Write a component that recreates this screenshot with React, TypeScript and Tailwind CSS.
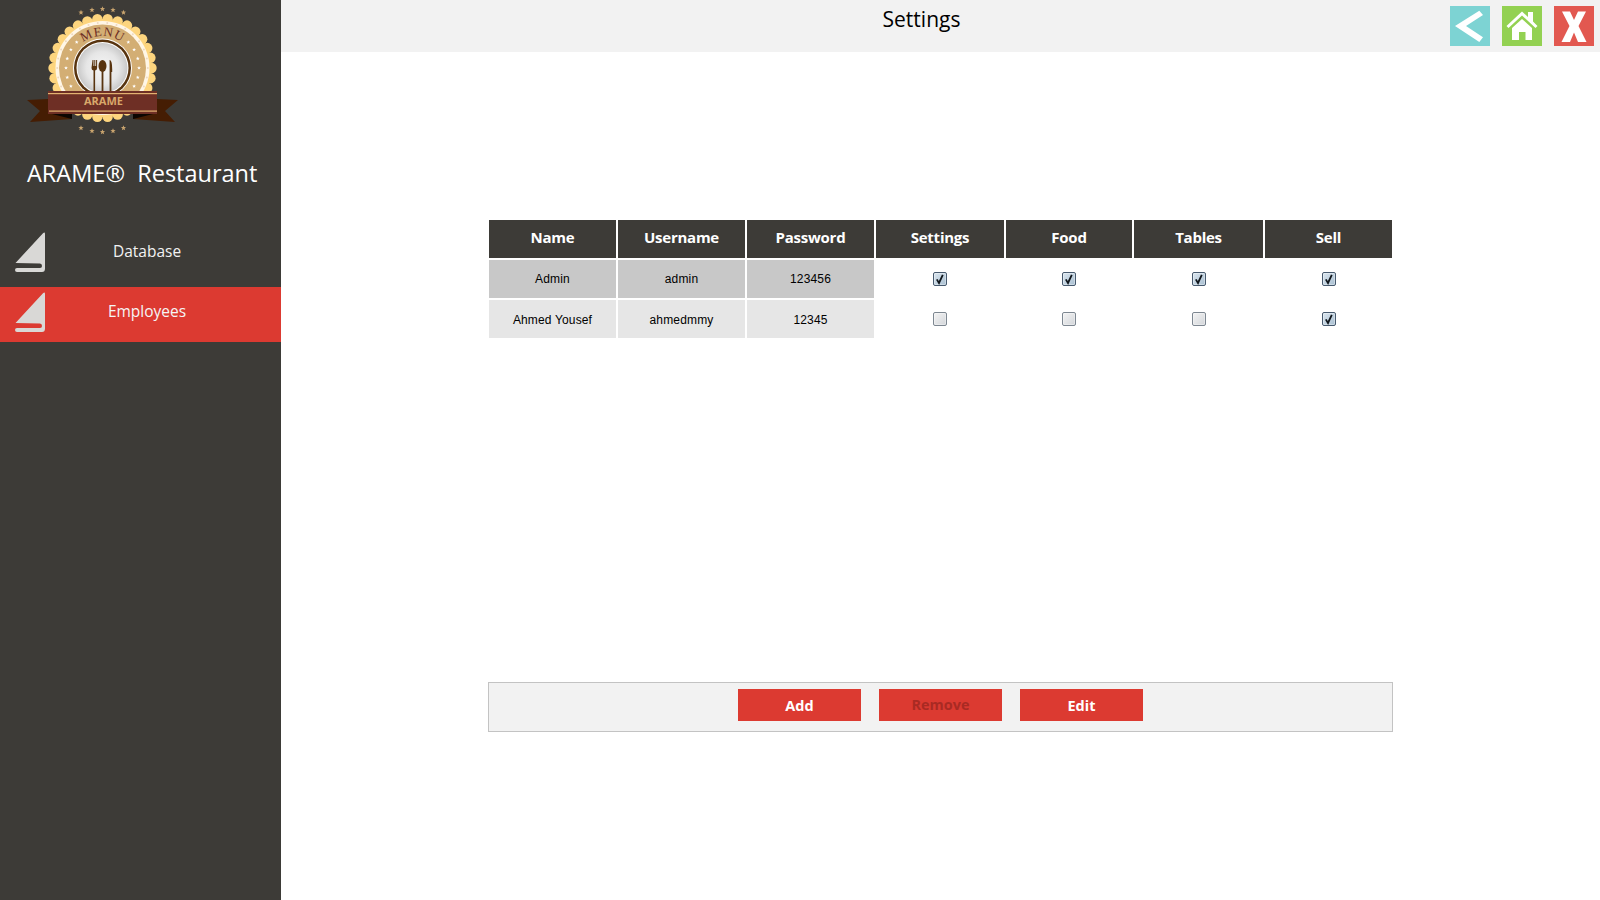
const uiFont = { fontFamily: '"Open Sans", "Noto Sans", sans-serif' };

const starPoints = (cx: number, cy: number, r: number) => {
  const pts: string[] = [];
  for (let i = 0; i < 10; i++) {
    const rad = i % 2 === 0 ? r : r * 0.42;
    const a = (Math.PI / 5) * i - Math.PI / 2;
    pts.push(`${(cx + rad * Math.cos(a)).toFixed(2)},${(cy + rad * Math.sin(a)).toFixed(2)}`);
  }
  return pts.join(' ');
};

const Logo = () => {
  const cx = 102.5;
  const cy = 68;
  const scallops = Array.from({ length: 30 }, (_, i) => (Math.PI * 2 * i) / 30);
  const dots = Array.from({ length: 30 }, (_, i) => (Math.PI * 2 * i) / 30);
  const ringStars = [150, 165, 180, 195, 210, 330, 345, 0, 15, 30, 135, 45, 225, 315].map((d) => (d * Math.PI) / 180);
  const outerStars = [
    [81, 12.5], [92, 10], [102.5, 9], [113, 10], [123.5, 12.5],
    [81, 128], [92, 131], [102.5, 132], [113, 131], [123.5, 128],
  ];
  return (
    <svg viewBox="25 5 155 130" className="block ml-[25px] mt-[5px] w-[155px] h-[130px]">
      <defs>
        <radialGradient id="plate">
          <stop offset="0%" stopColor="#f6f6f6" />
          <stop offset="65%" stopColor="#e6e6e6" />
          <stop offset="100%" stopColor="#c9c9c9" />
        </radialGradient>
        <path id="menuArc" d="M70.5 68 A32 32 0 0 1 134.5 68" />
      </defs>
      {outerStars.map(([x, y], i) => (
        <polygon key={i} points={starPoints(x, y, 2.8)} fill="#c9a46e" />
      ))}
      {scallops.map((a, i) => (
        <circle key={i} cx={cx + 49 * Math.cos(a)} cy={cy + 49 * Math.sin(a)} r="5.2" fill="#fdd57e" />
      ))}
      <circle cx={cx} cy={cy} r="49" fill="#fdd57e" />
      <circle cx={cx} cy={cy} r="47" fill="#fff6e6" />
      <circle cx={cx} cy={cy} r="43.5" fill="#d3ae74" />
      {dots.map((a, i) => (
        <circle key={i} cx={cx + 45.3 * Math.cos(a)} cy={cy + 45.3 * Math.sin(a)} r="1" fill="#eed9c0" />
      ))}
      {ringStars.map((a, i) => (
        <polygon key={i} points={starPoints(cx + 36.5 * Math.cos(a), cy + 36.5 * Math.sin(a), 2)} fill="#ffffff" />
      ))}
      <text fontSize="13" fill="#6e2f25" letterSpacing="0.8" style={{ fontFamily: '"Liberation Serif", serif' }}>
        <textPath href="#menuArc" startOffset="50%" textAnchor="middle">MENU</textPath>
      </text>
      <circle cx={cx} cy={cy} r="29.5" fill="#ffffff" />
      <circle cx={cx} cy={cy} r="28.5" fill="#58340f" />
      <circle cx={cx} cy={cy} r="26" fill="#ffffff" />
      <circle cx={cx} cy={cy} r="25" fill="url(#plate)" />
      <g fill="#58340f">
        <path d="M92.5 60h1v6h.8v-6h1v6h.8v-6h1v8q0 2-2 2.5V91h-1.6V70.5q-2-.5-2-2.5z" />
        <ellipse cx="102.5" cy="66" rx="4" ry="6" />
        <rect x="101.6" y="70" width="1.8" height="21" />
        <path d="M110 60q2.2 1 2.2 9v3h-.8V91h-1.8V60z" />
      </g>
      <polygon points="27,100 48,99 48,113 72,113 72,119 30,122 40,111" fill="#451d03" />
      <polygon points="178,100 157,99 157,113 133,113 133,119 175,122 165,111" fill="#451d03" />
      <polygon points="48,113 72,113 72,119" fill="#0c0602" />
      <polygon points="157,113 133,113 133,119" fill="#0c0602" />
      <rect x="48" y="91" width="109" height="23" fill="#6e2f25" />
      <rect x="48" y="93" width="109" height="1.2" fill="#e3b271" />
      <rect x="49" y="110.5" width="108" height="1.2" fill="#e3b271" />
      <text
        x="103.5"
        y="105"
        textAnchor="middle"
        fontSize="11"
        fontWeight="700"
        fill="#d9a86a"
        style={{ fontFamily: '"Open Sans", sans-serif' }}
      >
        ARAME
      </text>
    </svg>
  );
};

const BookIcon = () => (
  <svg viewBox="0 0 31 40" className="w-[31px] h-[40px] shrink-0">
    <path
      d="M0.5 31 L28 1.2 Q30 -0.5 30 2 V36.5 Q30 40 27 40 H2 Q0 40 0 38 Q0 36 2 36 H25 Q27 36 27 34 Q27 31.5 25 31.5 Z"
      fill="#d9d8d6"
    />
  </svg>
);

const Check = ({ on }: { on: boolean }) => (
  <span
    className={`relative block w-[14px] h-[14px] rounded-[2px] border shadow-[inset_0_0_0_1px_rgba(255,255,255,0.35)] ${
      on
        ? 'border-[#46596e] bg-gradient-to-br from-[#dbe6ef] to-[#a9bfd1]'
        : 'border-[#7d8791] bg-gradient-to-br from-[#f4f4f4] to-[#d3d6da]'
    }`}
  >
    {on && (
      <svg viewBox="0 0 14 14" className="absolute -top-px -left-px w-[14px] h-[14px]">
        <path d="M3.8 7.4 L6 11 L9.8 2.8" fill="none" stroke="#10161c" strokeWidth="1.8" />
      </svg>
    )}
  </span>
);

const headers = ['Name', 'Username', 'Password', 'Settings', 'Food', 'Tables', 'Sell'];
const rows = [
  { bg: 'bg-[#c8c8c8]', cells: ['Admin', 'admin', '123456'], perms: [true, true, true, true] },
  { bg: 'bg-[#e6e6e6]', cells: ['Ahmed Yousef', 'ahmedmmy', '12345'], perms: [false, false, false, true] },
];

const App = () => {
  return (
    <div className="flex w-full h-screen bg-white overflow-hidden" style={uiFont}>
      <aside className="w-[281px] shrink-0 bg-[#3d3b37] flex flex-col">
        <Logo />
        <div className="mt-[22px] pl-[27px] text-[23.5px] leading-[32px] text-white whitespace-pre">ARAME®  Restaurant</div>
        <div className="mt-[43px] h-[50px] pl-[15px] flex items-start text-[#f2f2f2] text-[15.5px]">
          <BookIcon />
          <span className="flex-1 text-center pr-[33px] pt-[7px] leading-[24px]">Database</span>
        </div>
        <div className="mt-[5px] h-[55px] pl-[15px] pt-[5px] flex items-start bg-[#dc3a31] text-[#f5f5f5] text-[15.5px]">
          <BookIcon />
          <span className="flex-1 text-center pr-[33px] pt-[7px] leading-[24px]">Employees</span>
        </div>
      </aside>

      <main className="flex-1 flex flex-col">
        <header className="h-[52px] bg-[#f2f2f2] flex items-start pr-[6px]">
          <h1 className="flex-1 pl-[112px] pt-[4px] text-center text-[21px] leading-[30px] text-black">Settings</h1>
          <div className="flex gap-[12px] pt-[6px]">
            <div className="w-[40px] h-[40px] bg-[#7dd3d3]">
              <svg viewBox="0 0 40 40" className="w-[40px] h-[40px]">
                <polygon points="5,20 29.3,4.7 33,9 16,20 33,31.3 29.3,36" fill="#ffffff" />
              </svg>
            </div>
            <div className="w-[40px] h-[40px] bg-[#93d152]">
              <svg viewBox="0 0 40 40" className="w-[40px] h-[40px]" fill="#ffffff">
                <polygon points="20,5.5 26,11 26,6 31,6 31,15.5 35.5,20 33.5,22 20,9.5 6.5,22 4.5,20" />
                <polygon points="20,13 30,22 30,34 23.5,34 23.5,26 17,26 17,34 10,34 10,22" />
              </svg>
            </div>
            <div className="w-[40px] h-[40px] bg-[#e25850]">
              <svg viewBox="0 0 40 40" className="w-[40px] h-[40px]">
                <polygon points="8,5.5 16,5.5 20,14 24,5.5 32,5.5 24.5,20 32.5,36 24,36 20,26.5 16,36 7.5,36 15.5,20" fill="#ffffff" />
              </svg>
            </div>
          </div>
        </header>

        <div className="ml-[208px] mt-[168px] w-[903px]">
          <div className="grid grid-cols-[127px_127px_127px_128px_126px_129px_127px] gap-[2px]">
            {headers.map((h) => (
              <div key={h} className="h-[38px] bg-[#3d3b37] text-white text-[15px] tracking-[-0.25px] font-bold flex items-center justify-center pb-[4px]">
                {h}
              </div>
            ))}
            {rows.map((r, ri) => (
              <div key={r.cells[0]} className="contents">
                {r.cells.map((c) => (
                  <div
                    key={c}
                    className={`h-[38px] ${r.bg} text-[12px] tracking-[0.15px] text-black flex items-center justify-center ${ri === 1 ? 'pt-[1px]' : ''}`}
                    style={{ fontFamily: '"Liberation Sans", sans-serif' }}
                  >
                    {c}
                  </div>
                ))}
                {r.perms.map((on, i) => (
                  <div key={i} className="h-[38px] flex items-center justify-center">
                    <Check on={on} />
                  </div>
                ))}
              </div>
            ))}
          </div>
        </div>

        <div className="ml-[207px] mt-[344px] w-[905px] h-[50px] bg-[#f2f2f2] border border-[#c3c3c3] flex justify-center gap-[18px] pt-[6px]">
          <button className="w-[123px] h-[32px] bg-[#dc3a31] text-white text-[14.5px] font-bold pt-[1px]">Add</button>
          <button className="w-[123px] h-[32px] bg-[#dc3a31] text-[#a92a23] text-[14.5px] font-bold">Remove</button>
          <button className="w-[123px] h-[32px] bg-[#dc3a31] text-white text-[14.5px] font-bold pt-[1px]">Edit</button>
        </div>
      </main>
    </div>
  );
};

export default App;
